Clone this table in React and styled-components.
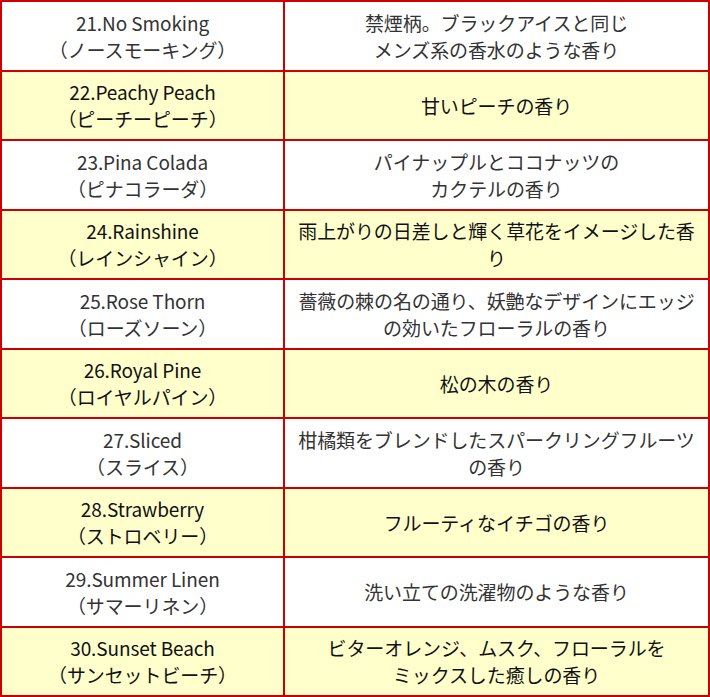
import React from 'react';
import styled, { createGlobalStyle } from 'styled-components';

const GlobalStyle = createGlobalStyle`
  html, body {
    margin: 0;
    padding: 0;
    background: #fff;
  }
  body {
    font-family: "Noto Sans CJK JP", "Noto Sans", sans-serif;
  }
`;

const fragrances = [
  { name: '21.No Smoking', kana: '（ノースモーキング）', desc: ['禁煙柄。ブラックアイスと同じ', 'メンズ系の香水のような香り'] },
  { name: '22.Peachy Peach', kana: '（ピーチーピーチ）', desc: ['甘いピーチの香り'] },
  { name: '23.Pina Colada', kana: '（ピナコラーダ）', desc: ['パイナップルとココナッツの', 'カクテルの香り'] },
  { name: '24.Rainshine', kana: '（レインシャイン）', desc: ['雨上がりの日差しと輝く草花をイメージした香り'] },
  { name: '25.Rose Thorn', kana: '（ローズソーン）', desc: ['薔薇の棘の名の通り、妖艶なデザインにエッジの効いたフローラルの香り'] },
  { name: '26.Royal Pine', kana: '（ロイヤルパイン）', desc: ['松の木の香り'] },
  { name: '27.Sliced', kana: '（スライス）', desc: ['柑橘類をブレンドしたスパークリングフルーツの香り'] },
  { name: '28.Strawberry', kana: '（ストロベリー）', desc: ['フルーティなイチゴの香り'] },
  { name: '29.Summer Linen', kana: '（サマーリネン）', desc: ['洗い立ての洗濯物のような香り'] },
  { name: '30.Sunset Beach', kana: '（サンセットビーチ）', desc: ['ビターオレンジ、ムスク、フローラルを', 'ミックスした癒しの香り'] },
];

const Table = styled.table`
  width: 710px;
  border-collapse: separate;
  border-spacing: 0;
  border-top: 2px solid #cc0000;
  border-left: 2px solid #cc0000;
  table-layout: fixed;
`;

const Row = styled.tr`
  background: ${(p) => (p.$alt ? '#ffffcc' : '#ffffff')};
  color: ${(p) => (p.$alt ? '#111111' : '#333333')};
`;

const Cell = styled.td`
  width: ${(p) => p.$w || 'auto'};
  border-right: 2px solid #cc0000;
  border-bottom: 2px solid #cc0000;
  padding: 6.75px 6px;
  text-align: center;
  vertical-align: middle;
  font-size: 19px;
  line-height: 27px;
  letter-spacing: -0.1px;
`;

const Line = styled.span`
  display: block;
`;

export default function App() {
  return (
    <>
      <GlobalStyle />
      <Table>
        <tbody>
          {fragrances.map((f, i) => (
            <Row key={f.name} $alt={i % 2 === 1}>
              <Cell $w="269px">
                <Line>{f.name}</Line>
                <Line>{f.kana}</Line>
              </Cell>
              <Cell>
                {f.desc.map((d) => (
                  <Line key={d}>{d}</Line>
                ))}
              </Cell>
            </Row>
          ))}
        </tbody>
      </Table>
    </>
  );
}
